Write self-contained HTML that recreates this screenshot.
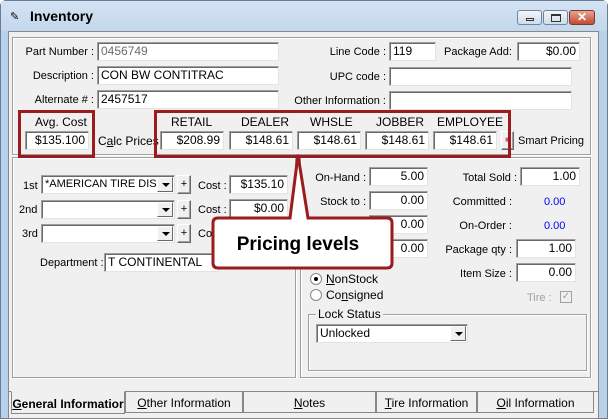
<!DOCTYPE html>
<html><head><style>
*{box-sizing:border-box;margin:0;padding:0}
body{width:608px;height:419px;overflow:hidden;background:#fff;font-family:"Liberation Sans",sans-serif;font-size:11px;color:#000;position:relative}
.a{position:absolute}
.in{position:absolute;background:#fff;border:1px solid #a0a0a0;border-right-color:#e3e3e3;border-bottom-color:#e3e3e3;box-shadow:inset 1px 1px 0 #696969;height:19px;line-height:17px;padding:0 3px;white-space:nowrap;overflow:hidden;font-size:12px}
.r{text-align:right}
.l{position:absolute;white-space:nowrap;line-height:14px}
.btn{position:absolute;background:#f0f0f0;border:1px solid #fff;border-right-color:#696969;border-bottom-color:#696969;box-shadow:inset -1px -1px 0 #a0a0a0;text-align:center;line-height:16px}
.grp{position:absolute;border:1px solid #a0a0a0;box-shadow:1px 1px 0 #fff, inset 1px 1px 0 #fff}
.dd{position:absolute;right:1px;top:1px;width:16px;height:15px;background:#f0f0f0;border:1px solid #fff;border-right-color:#696969;border-bottom-color:#696969}
.dd:after{content:"";position:absolute;left:4px;top:5px;border:4px solid transparent;border-top:4px solid #000;border-bottom:0}
.red{position:absolute;border:3px solid #9b1b1f}
.tab{position:absolute;top:392px;height:21px;border:1px solid #888;border-top:none;background:#f0f0f0;text-align:center;line-height:22px;font-size:12px}
</style></head><body>
<div class="a" style="left:0;top:0;width:608px;height:419px;background:#b9d1ea;border:1px solid #6b7d92;border-radius:6px 6px 0 0"></div>
<div class="a" style="left:1px;top:1px;width:606px;height:30px;background:linear-gradient(#d4e3f3,#c2d7ed)"></div>
<div class="l" style="left:10px;top:10px;font-size:11px">✎</div>
<div class="l" style="left:30px;top:9px;font-weight:bold;font-size:14px">Inventory</div>
<div class="a" style="left:517px;top:10px;width:25px;height:15px;border:1px solid #6f839c;border-radius:3px;background:linear-gradient(#f2f6fb,#cfdcea)"><div class="a" style="left:8px;top:7px;width:8px;height:3px;border:1px solid #333"></div></div>
<div class="a" style="left:543px;top:10px;width:25px;height:15px;border:1px solid #6f839c;border-radius:3px;background:linear-gradient(#f2f6fb,#cfdcea)"><div class="a" style="left:7px;top:3px;width:10px;height:8px;border:1px solid #333;border-top-width:2px"></div></div>
<div class="a" style="left:569px;top:10px;width:26px;height:15px;border:1px solid #7a3a30;border-radius:3px;background:linear-gradient(#e8a493,#c44a30);color:#fff;font-weight:bold;text-align:center;line-height:13px;font-size:12px">✕</div>
<div class="a" style="left:8px;top:31px;width:591px;height:388px;background:#f0f0f0;border:1px solid #888"></div>
<div class="grp" style="left:12px;top:37px;width:579px;height:118px"></div>
<div class="grp" style="left:12px;top:157px;width:284px;height:221px"></div>
<div class="grp" style="left:300px;top:157px;width:291px;height:221px"></div>

<div class="l r" style="left:0;width:94px;top:45px">Part Number :</div>
<div class="in" style="left:97px;top:42px;width:182px;color:#6d6d6d">0456749</div>
<div class="l r" style="left:0;width:94px;top:69px">Description :</div>
<div class="in" style="left:97px;top:66px;width:182px">CON BW CONTITRAC</div>
<div class="l r" style="left:0;width:94px;top:93px">Alternate # :</div>
<div class="in" style="left:97px;top:90px;width:182px">2457517</div>

<div class="l r" style="left:280px;width:106px;top:45px">Line Code :</div>
<div class="in" style="left:389px;top:42px;width:47px">119</div>
<div class="l" style="left:444px;top:45px">Package Add:</div>
<div class="in r" style="left:517px;top:42px;width:63px">$0.00</div>
<div class="l r" style="left:280px;width:106px;top:70px">UPC code :</div>
<div class="in" style="left:389px;top:67px;width:183px"></div>
<div class="l r" style="left:280px;width:106px;top:94px">Other Information :</div>
<div class="in" style="left:389px;top:91px;width:183px"></div>

<div class="l" style="left:35px;top:115px;font-size:12px">Avg. Cost</div>
<div class="in r" style="left:25px;top:131px;width:64px">$135.100</div>
<div class="l" style="left:98px;top:134px;font-size:12px">C<u>a</u>lc Prices</div>
<div class="l" style="left:171px;top:115px;font-size:12px">RETAIL</div>
<div class="l" style="left:241px;top:115px;font-size:12px">DEALER</div>
<div class="l" style="left:310px;top:115px;font-size:12px">WHSLE</div>
<div class="l" style="left:376px;top:115px;font-size:12px">JOBBER</div>
<div class="l" style="left:437px;top:115px;font-size:12px">EMPLOYEE</div>
<div class="in r" style="left:160px;top:131px;width:64px">$208.99</div>
<div class="in r" style="left:229px;top:131px;width:64px">$148.61</div>
<div class="in r" style="left:297px;top:131px;width:64px">$148.61</div>
<div class="in r" style="left:365px;top:131px;width:64px">$148.61</div>
<div class="in r" style="left:433px;top:131px;width:64px">$148.61</div>
<div class="btn" style="left:501px;top:131px;width:13px;height:19px;color:#e05090;font-size:8px">■</div>
<div class="l" style="left:518px;top:134px">Smart Pricing</div>
<div class="red" style="left:18px;top:110px;width:77px;height:48px"></div>
<div class="red" style="left:154px;top:110px;width:357px;height:48px"></div>

<div class="l" style="left:23px;top:179px">1st</div>
<div class="in" style="left:41px;top:175px;width:134px;font-size:11px">*AMERICAN TIRE DIS<div class="dd"></div></div>
<div class="btn" style="left:177px;top:175px;width:14px;height:19px">+</div>
<div class="l" style="left:198px;top:179px">Cost :</div>
<div class="in r" style="left:229px;top:175px;width:59px">$135.10</div>
<div class="l" style="left:19px;top:203px">2nd</div>
<div class="in" style="left:41px;top:200px;width:134px"><div class="dd"></div></div>
<div class="btn" style="left:177px;top:200px;width:14px;height:19px">+</div>
<div class="l" style="left:198px;top:203px">Cost :</div>
<div class="in r" style="left:229px;top:199px;width:59px">$0.00</div>
<div class="l" style="left:22px;top:227px">3rd</div>
<div class="in" style="left:41px;top:224px;width:134px"><div class="dd"></div></div>
<div class="btn" style="left:177px;top:224px;width:14px;height:19px">+</div>
<div class="l" style="left:198px;top:227px">Co</div>
<div class="l" style="left:40px;top:256px">Department :</div>
<div class="in" style="left:104px;top:253px;width:115px">T CONTINENTAL</div>

<div class="l r" style="left:300px;width:66px;top:171px">On-Hand :</div>
<div class="in r" style="left:369px;top:167px;width:59px">5.00</div>
<div class="l r" style="left:300px;width:66px;top:195px">Stock to :</div>
<div class="in r" style="left:369px;top:191px;width:59px">0.00</div>
<div class="in r" style="left:369px;top:215px;width:59px">0.00</div>
<div class="in r" style="left:369px;top:239px;width:59px">0.00</div>
<div class="l r" style="left:430px;width:87px;top:171px">Total Sold :</div>
<div class="in r" style="left:520px;top:167px;width:60px">1.00</div>
<div class="l r" style="left:430px;width:82px;top:195px">Committed :</div>
<div class="l" style="left:544px;top:195px;color:#0000ee">0.00</div>
<div class="l r" style="left:430px;width:82px;top:219px">On-Order :</div>
<div class="l" style="left:544px;top:219px;color:#0000ee">0.00</div>
<div class="l r" style="left:430px;width:82px;top:243px">Package qty :</div>
<div class="in r" style="left:516px;top:239px;width:60px">1.00</div>
<div class="l r" style="left:430px;width:82px;top:267px">Item Size :</div>
<div class="in r" style="left:516px;top:263px;width:60px">0.00</div>
<div class="a" style="left:310px;top:273px;width:12px;height:12px;border-radius:50%;border:1px solid #888;background:#fff"><div class="a" style="left:3px;top:3px;width:4px;height:4px;border-radius:50%;background:#000"></div></div>
<div class="l" style="left:326px;top:272px;font-size:12px"><u>N</u>onStock</div>
<div class="a" style="left:310px;top:289px;width:12px;height:12px;border-radius:50%;border:1px solid #888;background:#fff"></div>
<div class="l" style="left:326px;top:288px;font-size:12px">Co<u>n</u>signed</div>
<div class="l" style="left:527px;top:291px;color:#a0a0a0">Tire :</div>
<div class="a" style="left:560px;top:291px;width:12px;height:12px;border:1px solid #a0a0a0;color:#a0a0a0;font-size:10px;line-height:10px;text-align:center">✓</div>
<div class="grp" style="left:308px;top:314px;width:279px;height:57px"></div>
<div class="l" style="left:316px;top:307px;background:#f0f0f0;padding:0 2px;font-size:12px">Lock Status</div>
<div class="in" style="left:316px;top:324px;width:152px;height:19px">Unlocked<div class="dd"></div></div>

<svg class="a" style="left:205px;top:150px" width="195" height="125">
<path d="M18 68 H85 L93 5 L103 68 H182 Q187 68 187 73 V113 Q187 118 182 118 H13 Q8 118 8 113 V73 Q8 68 13 68 Z" fill="#fff" stroke="#9b1b1f" stroke-width="3"/>
<text x="93" y="100" text-anchor="middle" font-family="Liberation Sans" font-weight="bold" font-size="19">Pricing levels</text>
</svg>

<div class="a" style="left:9px;top:391px;width:589px;height:1px;background:#888"></div>
<div class="tab" style="left:11px;top:391px;width:114px;height:23px;border-top:1px solid #f0f0f0;font-weight:bold;line-height:24px"><u>G</u>eneral Informatior</div>
<div class="tab" style="left:125px;width:118px"><u>O</u>ther Information</div>
<div class="tab" style="left:243px;width:133px"><u>N</u>otes</div>
<div class="tab" style="left:376px;width:101px"><u>T</u>ire Information</div>
<div class="tab" style="left:477px;width:117px"><u>O</u>il Information</div>
</body></html>
